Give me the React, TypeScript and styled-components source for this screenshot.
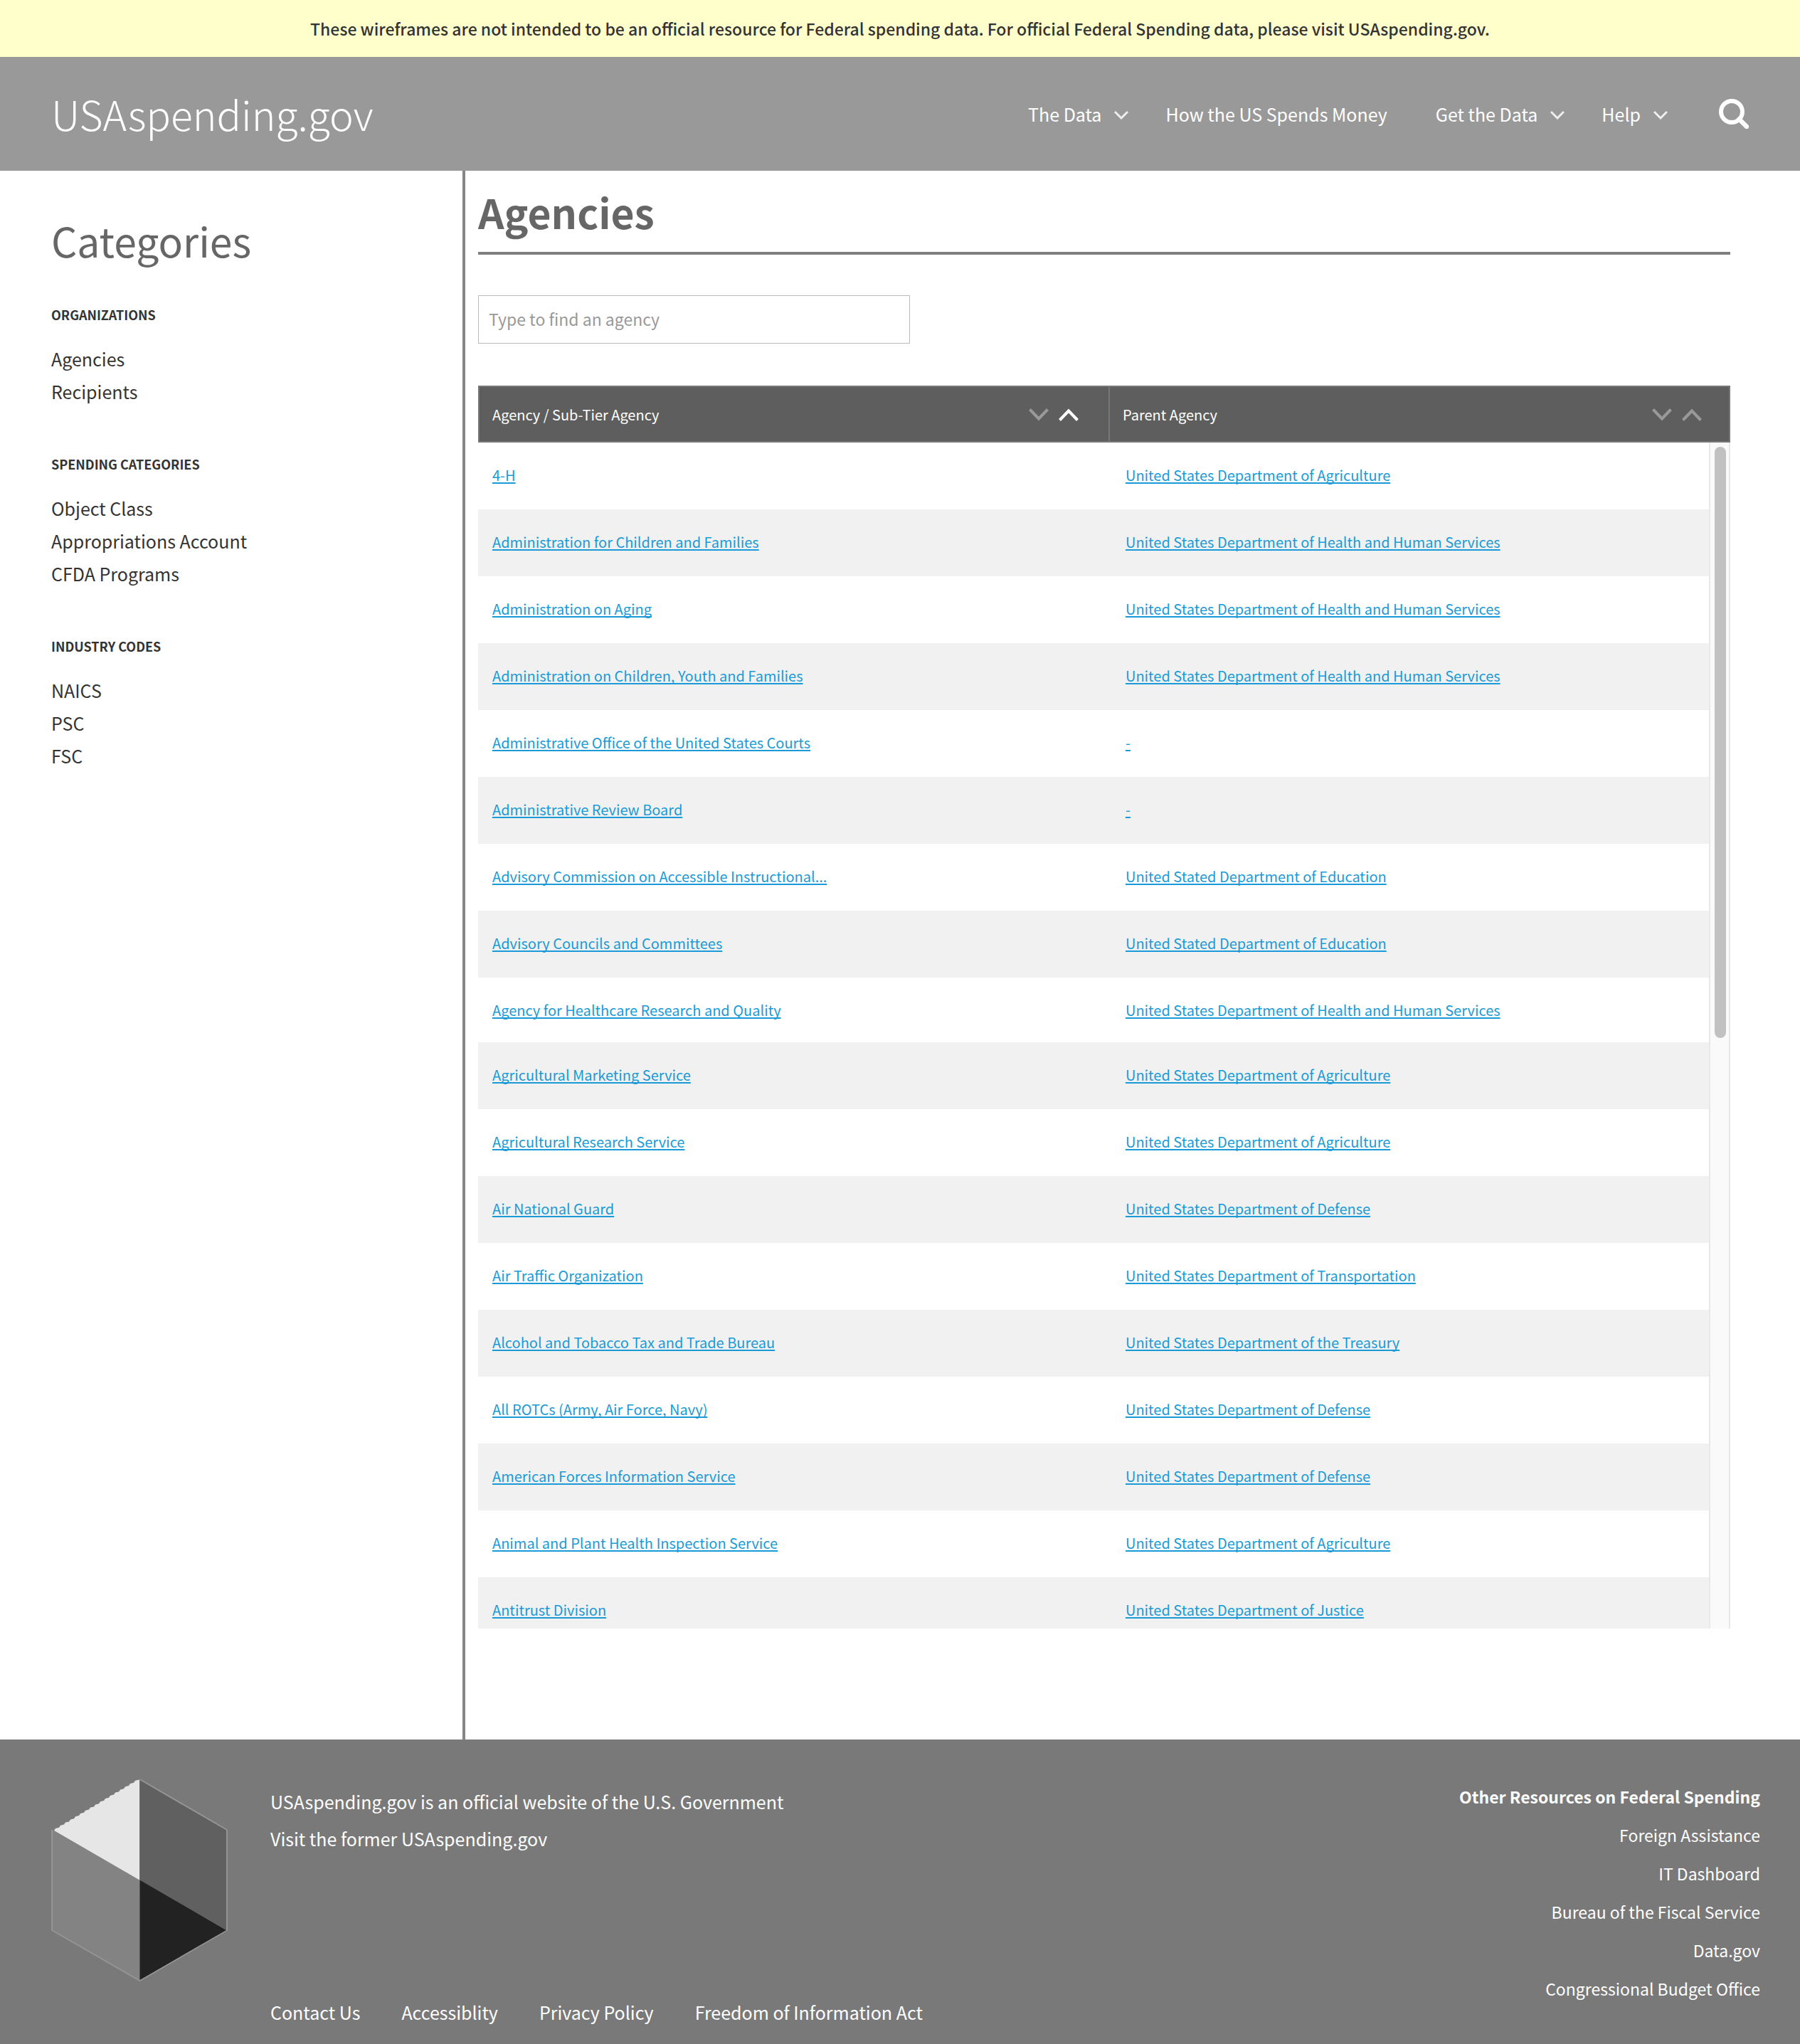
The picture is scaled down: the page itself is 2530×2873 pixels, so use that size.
import React, { useState } from "react";
import styled, { createGlobalStyle } from "styled-components";

const GlobalStyle = createGlobalStyle`
  *, *::before, *::after { box-sizing: border-box; }
  body {
    margin: 0;
    background: #fff;
    color: #333;
    font-family: "Noto Sans CJK SC", "Noto Sans", sans-serif;
    font-size: 25px;
  }
  h1, h2, h3, p, ul { margin: 0; padding: 0; }
  ul { list-style: none; }
  button, input { font-family: inherit; }
  button { padding: 0; border: 0; background: none; color: inherit; cursor: pointer; }
`;

const Banner = styled.p`
  background: #ffffcc;
  line-height: 80px;
  text-align: center;
  font-size: 23px;
  font-weight: 500;
`;

const Header = styled.header`
  display: flex;
  align-items: center;
  height: 160px;
  padding: 0 72px;
  background: #999;
  color: #fff;
`;

const Brand = styled.a`
  margin-right: auto;
  padding-bottom: 2px;
  color: inherit;
  font-size: 57px;
  font-weight: 300;
  line-height: 80px;
  text-decoration: none;
`;

const Nav = styled.nav`
  display: flex;
  align-items: center;
  gap: 52px;
  margin-right: 72px;
`;

const NavButton = styled.button`
  display: flex;
  align-items: center;
  gap: 18px;
  font-size: 25px;
  line-height: 40px;
`;

const NavLink = styled.a`
  margin-right: 16px;
  color: inherit;
  line-height: 40px;
  text-decoration: none;
`;

const SearchButton = styled.button`
  display: flex;
`;

const Body = styled.div`
  display: flex;
`;

const Sidebar = styled.aside`
  flex: 0 0 654px;
  padding: 57px 72px 0;
  border-right: 4px solid #868686;
`;

const SidebarTitle = styled.h2`
  margin-bottom: 50px;
  color: #666;
  font-size: 57px;
  font-weight: 400;
  line-height: 80px;
`;

const Group = styled.section`
  margin-bottom: 64px;
`;

const GroupTitle = styled.h3`
  margin-bottom: 24px;
  font-size: 18px;
  font-weight: 700;
  line-height: 30px;
  text-transform: uppercase;
`;

const GroupItem = styled.li`
  line-height: 46px;
`;

const PlainLink = styled.a`
  color: inherit;
  text-decoration: none;
`;

const Main = styled.main`
  flex: 1;
  min-width: 0;
  padding: 17px 98px 156px 18px;
`;

const PageTitle = styled.h1`
  padding-bottom: 17px;
  border-bottom: 4px solid #7f7f7f;
  color: #666;
  font-size: 57px;
  font-weight: 700;
  line-height: 80px;
`;

const SearchField = styled.input`
  display: block;
  width: 100%;
  max-width: 607px;
  height: 68px;
  margin: 57px 0 59px;
  padding: 0 14px 2px;
  border: 1px solid #bbb;
  border-radius: 0;
  color: #333;
  font-size: 23px;
  &::placeholder { color: #999; opacity: 1; }
`;

const TableFrame = styled.div`
  position: relative;
  height: 1747px;
  overflow: hidden;
`;

const AgencyTable = styled.table`
  width: 100%;
  border-collapse: separate;
  border-spacing: 0;
  table-layout: fixed;
  font-size: 20px;
`;

const HeadCell = styled.th<{ $width?: string }>`
  width: ${(p) => p.$width ?? "auto"};
  height: 80px;
  padding: 2px 42px 0 18px;
  border: 2px solid #777;
  border-right-width: 0;
  background: #5e5e5e;
  color: #fff;
  font-weight: 400;
  text-align: left;
  &:last-child { border-right-width: 2px; padding-right: 38px; }
`;

const HeadContent = styled.div`
  display: flex;
  align-items: center;
  justify-content: space-between;
  line-height: 30px;
`;

const SortButtons = styled.div`
  display: flex;
  gap: 14px;
`;

const SortButton = styled.button`
  display: flex;
`;

const Row = styled.tr<{ $compact?: boolean }>`
  background: #fff;
  &:nth-child(even) { background: #f1f1f1; }
  & > td { padding-bottom: ${(p) => (p.$compact ? 30 : 33)}px; }
`;

const Cell = styled.td`
  padding: 31px 20px 33px;
  line-height: 30px;
  white-space: nowrap;
  & + & { padding-left: 24px; }
`;

const TableLink = styled.a`
  color: #1a9bd7;
  text-decoration: underline;
  text-decoration-thickness: 2px;
  text-underline-offset: 2px;
  text-decoration-skip-ink: none;
`;

const ScrollTrack = styled.div`
  position: absolute;
  top: 80px;
  right: 0;
  bottom: 0;
  width: 30px;
  padding: 6px 4px 0 6px;
  border: solid #e8e8e8;
  border-width: 0 2px;
  background: #fafafa;
`;

const ScrollThumb = styled.div`
  height: 50%;
  border-radius: 8px;
  background: #c1c1c1;
`;

const Footer = styled.footer`
  display: flex;
  min-height: 428px;
  padding: 0 56px 0 72px;
  background: #797979;
  color: #fff;
`;

const FooterLogo = styled.div`
  padding-top: 55px;
`;

const FooterInfo = styled.div`
  display: flex;
  flex: 1;
  flex-direction: column;
  justify-content: space-between;
  padding: 61px 0 19px 60px;
  line-height: 52px;
`;

const FooterLinks = styled.ul`
  display: flex;
  gap: 58px;
`;

const Resources = styled.section`
  padding-top: 53px;
  font-size: 23px;
  line-height: 54px;
  text-align: right;
`;

const ResourcesTitle = styled.h3`
  font-size: 23px;
  font-weight: 700;
`;

const Chevron = () => (
  <svg width="20" height="16" viewBox="0 0 20 16" fill="none" stroke="#eee" strokeWidth="3" aria-hidden="true">
    <path d="M1 5 10 14 19 5" />
  </svg>
);

const SortArrow = ({ up, active }: { up?: boolean; active: boolean }) => (
  <svg width="28" height="18" viewBox="0 0 28 18" fill="none" stroke={active ? "#fff" : "#999"} strokeWidth="4" aria-hidden="true">
    <path d={up ? "M1.5 16.5 14 3.5 26.5 16.5" : "M1.5 1.5 14 14.5 26.5 1.5"} />
  </svg>
);

const SearchIcon = () => (
  <svg width="42" height="42" viewBox="0 0 42 42" fill="none" stroke="#fff" strokeWidth="6" aria-hidden="true">
    <circle cx="18" cy="18" r="15" />
    <path d="M28.5 28.5 39 39" strokeWidth="6.5" strokeLinecap="round" />
  </svg>
);

// Serrated upper-left edge of the light face, climbing from the left corner to the top.
const serratedEdge = Array.from({ length: 17 }, (_, i) => `l2 -3 l${i % 17 === 16 ? 6 : 5} -1.2`).join(" ");

const HexLogo = () => (
  <svg width="248" height="286" viewBox="0 0 248 286" role="img" aria-label="USAspending.gov">
    <path d="M124.5 1 247 72V213L124.5 142.5Z" fill="#606060" />
    <path d="M1 72 124.5 142.5V284L1 213Z" fill="#838383" />
    <path d="M124.5 1 247 72V213L124.5 284 1 213V72" fill="none" stroke="#949494" strokeWidth="2" />
    <path d="M124.5 142.5 246 213 124.5 283Z" fill="#222" />
    <path d={`M4 73 ${serratedEdge} V142.5Z`} fill="#e6e6e6" />
  </svg>
);

const groups = [
  { title: "Organizations", items: ["Agencies", "Recipients"] },
  { title: "Spending Categories", items: ["Object Class", "Appropriations Account", "CFDA Programs"] },
  { title: "Industry Codes", items: ["NAICS", "PSC", "FSC"] },
];

const AGRICULTURE = "United States Department of Agriculture";
const HEALTH = "United States Department of Health and Human Services";
const EDUCATION = "United Stated Department of Education";
const DEFENSE = "United States Department of Defense";

const agencies: { name: string; parent: string; compact?: boolean }[] = [
  { name: "4-H", parent: AGRICULTURE },
  { name: "Administration for Children and Families", parent: HEALTH },
  { name: "Administration on Aging", parent: HEALTH },
  { name: "Administration on Children, Youth and Families", parent: HEALTH },
  { name: "Administrative Office of the United States Courts", parent: "-" },
  { name: "Administrative Review Board", parent: "-" },
  { name: "Advisory Commission on Accessible Instructional...", parent: EDUCATION },
  { name: "Advisory Councils and Committees", parent: EDUCATION },
  { name: "Agency for Healthcare Research and Quality", parent: HEALTH, compact: true },
  { name: "Agricultural Marketing Service", parent: AGRICULTURE },
  { name: "Agricultural Research Service", parent: AGRICULTURE },
  { name: "Air National Guard", parent: DEFENSE },
  { name: "Air Traffic Organization", parent: "United States Department of Transportation" },
  { name: "Alcohol and Tobacco Tax and Trade Bureau", parent: "United States Department of the Treasury" },
  { name: "All ROTCs (Army, Air Force, Navy)", parent: DEFENSE },
  { name: "American Forces Information Service", parent: DEFENSE },
  { name: "Animal and Plant Health Inspection Service", parent: AGRICULTURE },
  { name: "Antitrust Division", parent: "United States Department of Justice" },
];

const footerLinks = ["Contact Us", "Accessiblity", "Privacy Policy", "Freedom of Information Act"];
const resources = ["Foreign Assistance", "IT Dashboard", "Bureau of the Fiscal Service", "Data.gov", "Congressional Budget Office"];

type Sort = "name-down" | "name-up" | "parent-down" | "parent-up";

export default function App() {
  const [sort, setSort] = useState<Sort>("name-up");
  const [query, setQuery] = useState("");
  const shown = agencies.filter((a) => a.name.toLowerCase().includes(query.toLowerCase()));

  const sorter = (column: "name" | "parent", label: string) => (
    <HeadContent>
      {label}
      <SortButtons>
        <SortButton type="button" aria-label={`Sort ${label} descending`} onClick={() => setSort(`${column}-down`)}>
          <SortArrow active={sort === `${column}-down`} />
        </SortButton>
        <SortButton type="button" aria-label={`Sort ${label} ascending`} onClick={() => setSort(`${column}-up`)}>
          <SortArrow up active={sort === `${column}-up`} />
        </SortButton>
      </SortButtons>
    </HeadContent>
  );

  return (
    <>
      <GlobalStyle />
      <Banner>
        These wireframes are not intended to be an official resource for Federal spending data. For official Federal
        Spending data, please visit USAspending.gov.
      </Banner>
      <Header>
        <Brand href="#">USAspending.gov</Brand>
        <Nav>
          <NavButton type="button">The Data<Chevron /></NavButton>
          <NavLink href="#">How the US Spends Money</NavLink>
          <NavButton type="button">Get the Data<Chevron /></NavButton>
          <NavButton type="button">Help<Chevron /></NavButton>
        </Nav>
        <SearchButton type="button" aria-label="Search"><SearchIcon /></SearchButton>
      </Header>
      <Body>
        <Sidebar>
          <SidebarTitle>Categories</SidebarTitle>
          {groups.map((group) => (
            <Group key={group.title}>
              <GroupTitle>{group.title}</GroupTitle>
              <ul>
                {group.items.map((item) => (
                  <GroupItem key={item}><PlainLink href="#">{item}</PlainLink></GroupItem>
                ))}
              </ul>
            </Group>
          ))}
        </Sidebar>
        <Main>
          <PageTitle>Agencies</PageTitle>
          <SearchField
            type="text"
            aria-label="Find an agency"
            placeholder="Type to find an agency"
            value={query}
            onChange={(e) => setQuery(e.target.value)}
          />
          <TableFrame>
            <AgencyTable>
              <thead>
                <tr>
                  <HeadCell $width="886px" scope="col">{sorter("name", "Agency / Sub-Tier Agency")}</HeadCell>
                  <HeadCell scope="col">{sorter("parent", "Parent Agency")}</HeadCell>
                </tr>
              </thead>
              <tbody>
                {shown.map((agency) => (
                  <Row key={agency.name} $compact={agency.compact}>
                    <Cell><TableLink href="#">{agency.name}</TableLink></Cell>
                    <Cell><TableLink href="#">{agency.parent}</TableLink></Cell>
                  </Row>
                ))}
              </tbody>
            </AgencyTable>
            <ScrollTrack><ScrollThumb /></ScrollTrack>
          </TableFrame>
        </Main>
      </Body>
      <Footer>
        <FooterLogo><HexLogo /></FooterLogo>
        <FooterInfo>
          <div>
            <p>USAspending.gov is an official website of the U.S. Government</p>
            <p><PlainLink href="#">Visit the former USAspending.gov</PlainLink></p>
          </div>
          <FooterLinks>
            {footerLinks.map((link) => (
              <li key={link}><PlainLink href="#">{link}</PlainLink></li>
            ))}
          </FooterLinks>
        </FooterInfo>
        <Resources>
          <ResourcesTitle>Other Resources on Federal Spending</ResourcesTitle>
          <ul>
            {resources.map((link) => (
              <li key={link}><PlainLink href="#">{link}</PlainLink></li>
            ))}
          </ul>
        </Resources>
      </Footer>
    </>
  );
}
